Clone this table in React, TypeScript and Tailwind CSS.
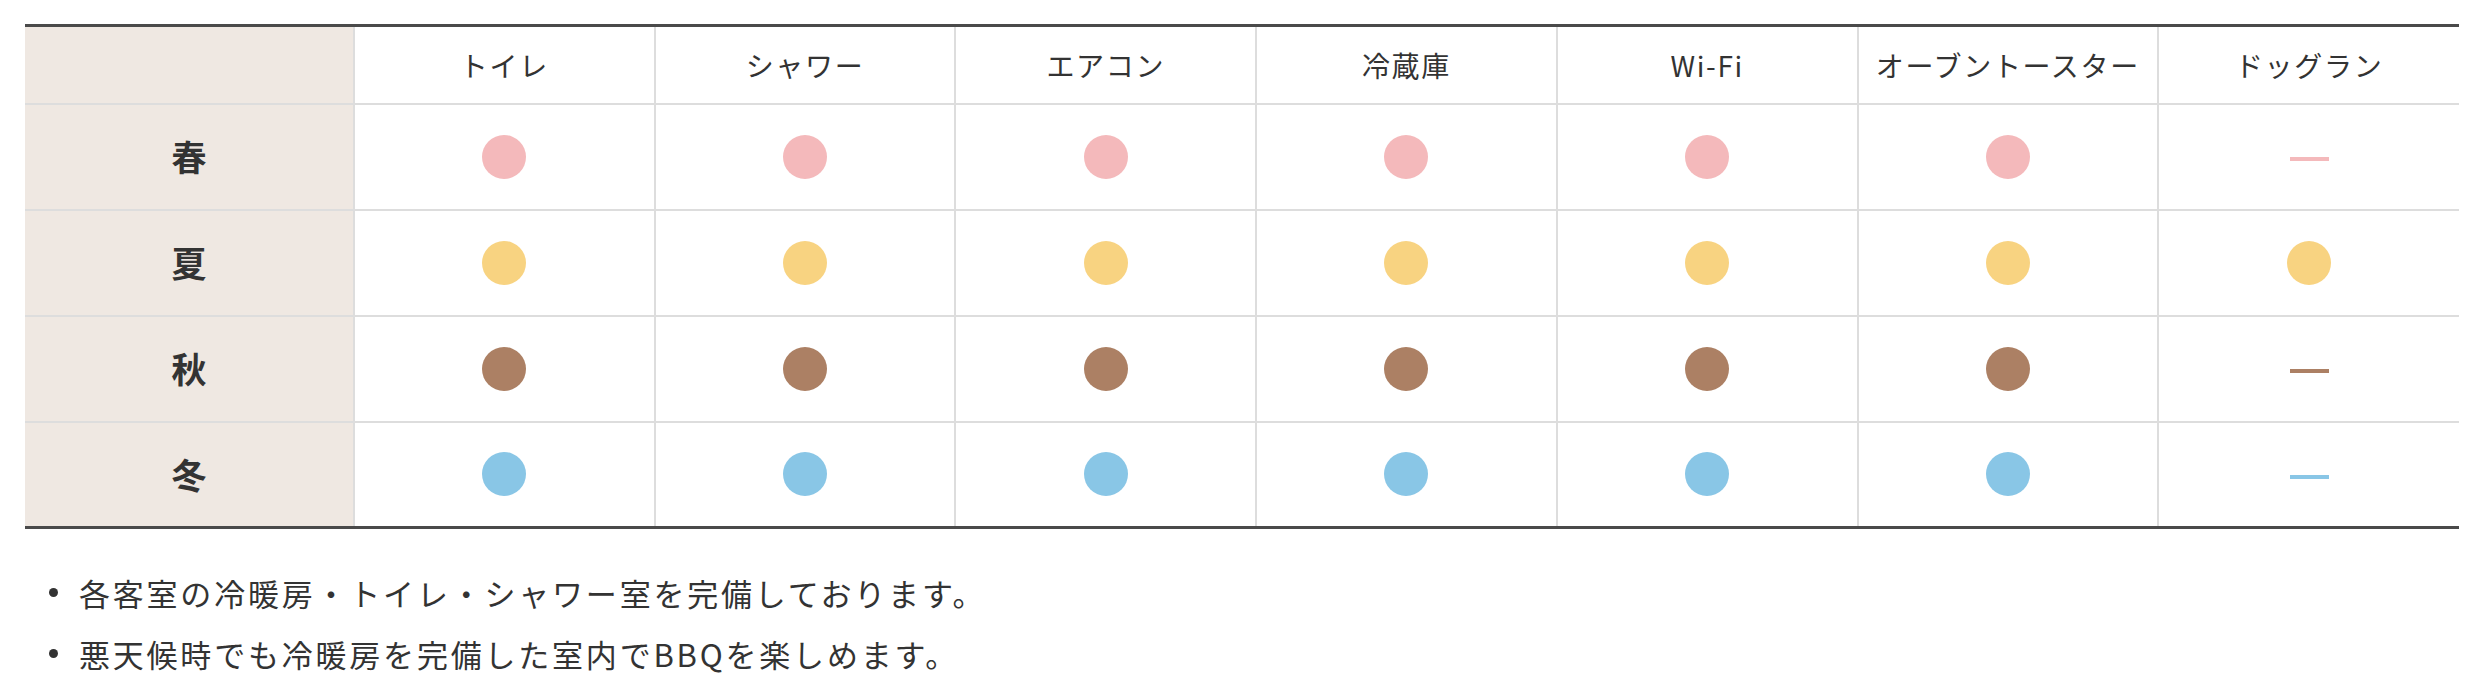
import React from "react"

type Mark = "pink" | "yellow" | "brown" | "blue"

const columns = ["トイレ", "シャワー", "エアコン", "冷蔵庫", "Wi-Fi", "オーブントースター", "ドッグラン"]

const seasons: { label: string; color: Mark; dogRun: boolean }[] = [
  { label: "春", color: "pink", dogRun: false },
  { label: "夏", color: "yellow", dogRun: true },
  { label: "秋", color: "brown", dogRun: false },
  { label: "冬", color: "blue", dogRun: false },
]

const dotClass: Record<Mark, string> = {
  pink: "bg-[#f4b9bb]",
  yellow: "bg-[#f8d381]",
  brown: "bg-[#ac8064]",
  blue: "bg-[#89c6e6]",
}

const Dot = ({ color }: { color: Mark }) => (
  <span className={`inline-block w-[44px] h-[44px] rounded-full align-middle ${dotClass[color]}`} />
)

const Dash = ({ color }: { color: Mark }) => (
  <span className={`inline-block w-[39px] h-[4px] align-middle ${dotClass[color]}`} />
)

const App = () => {
  return (
    <main
      className="w-full min-h-screen bg-white text-[#333] px-[25px] pt-[24px]"
      style={{ fontFamily: '"Noto Sans CJK JP", "Noto Sans", sans-serif' }}
    >
      <table className="w-full table-fixed border-collapse border-t-[3px] border-b-[3px] border-t-[#4a4a4a] border-b-[#4a4a4a]">
        <colgroup>
          <col className="w-[329px]" />
          {columns.map((c) => (
            <col key={c} />
          ))}
        </colgroup>
        <thead>
          <tr className="h-[78px]">
            <th className="bg-[#efe8e2] border-r-2 border-b-2 border-[#dddddd]" />
            {columns.map((c) => (
              <th
                key={c}
                className="font-normal text-[28px] tracking-[0.06em] text-center border-x-2 border-b-2 border-[#dddddd] last:border-r-0"
              >
                {c}
              </th>
            ))}
          </tr>
        </thead>
        <tbody>
          {seasons.map((s) => (
            <tr key={s.label} className="h-[106px]">
              <th className="bg-[#efe8e2] font-bold text-[35px] text-center border-r-2 border-b-2 border-[#dddddd]">
                {s.label}
              </th>
              {columns.map((c, i) => (
                <td
                  key={c}
                  className="text-center border-x-2 border-b-2 border-[#dddddd] last:border-r-0"
                >
                  {i === columns.length - 1 && !s.dogRun ? <Dash color={s.color} /> : <Dot color={s.color} />}
                </td>
              ))}
            </tr>
          ))}
        </tbody>
      </table>

      <ul className="mt-[33px] text-[31px] tracking-[0.09em] leading-[61px]">
        <li className="flex items-center">
          <span className="w-[9px] h-[9px] rounded-full bg-[#333] ml-[24px] mr-[21px]" />
          各客室の冷暖房・トイレ・シャワー室を完備しております。
        </li>
        <li className="flex items-center">
          <span className="w-[9px] h-[9px] rounded-full bg-[#333] ml-[24px] mr-[21px]" />
          悪天候時でも冷暖房を完備した室内でBBQを楽しめます。
        </li>
      </ul>
    </main>
  )
}

export default App
